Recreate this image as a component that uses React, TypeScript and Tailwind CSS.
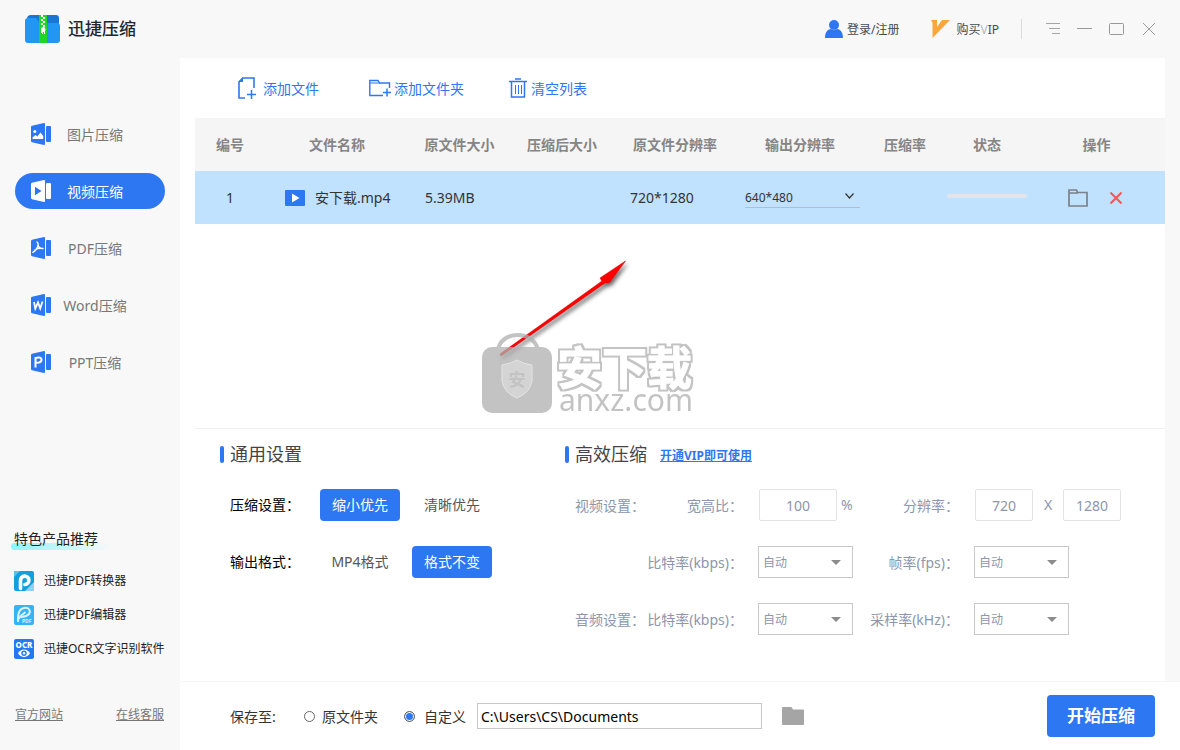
import { useState } from "react";
import type { ReactNode } from "react";

type NavKey = "image" | "video" | "pdf" | "word" | "ppt";

const navItems: { key: NavKey; label: string }[] = [
  { key: "image", label: "图片压缩" },
  { key: "video", label: "视频压缩" },
  { key: "pdf", label: "PDF压缩" },
  { key: "word", label: "Word压缩" },
  { key: "ppt", label: "PPT压缩" },
];

const columns = [
  { title: "编号", width: "w-[70px]" },
  { title: "文件名称", width: "w-[144px]" },
  { title: "原文件大小", width: "w-[101px]" },
  { title: "压缩后大小", width: "w-[104px]" },
  { title: "原文件分辨率", width: "w-[122px]" },
  { title: "输出分辨率", width: "w-[128px]" },
  { title: "压缩率", width: "w-[82px]" },
  { title: "状态", width: "w-[82px]" },
  { title: "操作", width: "" },
];

const files = [{ id: 1, name: "安下载.mp4", size: "5.39MB", resolution: "720*1280" }];

function Logo() {
  return (
    <svg width="35" height="28" viewBox="0 0 35 28" aria-hidden="true">
      <path d="M2 4a4 4 0 0 1 4-4h25a3 3 0 0 1 3 3v10H2z" fill="#1976d2" />
      <path d="M0 6a3 3 0 0 1 3-3h7c3 0 3 5 6 5h16a3 3 0 0 1 3 3v14a3 3 0 0 1-3 3H3a3 3 0 0 1-3-3z" fill="#2196f3" />
      <path d="M14 0h8v28h-8z" fill="#1fd622" />
      <path
        d="M16 0h2v2h-2zM18 2h2v2h-2zM16 4h2v2h-2zM18 6h2v2h-2zM16 8h2v2h-2zM18 10h2v2h-2z"
        fill="#fff"
      />
      <path d="M18 12a2.500 2.500 0 0 1 2 4v3h-1v-2h-1v2h-1v-1h-1v-4a2 2 0 0 1 2-2z" fill="#fff" />
    </svg>
  );
}

function NavIcon({ name, active }: { name: NavKey; active: boolean }) {
  const main = active ? "#fff" : "#2e77f2";
  const mark = active ? "#2e77f2" : "#fff";
  return (
    <svg width="20" height="22" viewBox="0 0 20 22" className="shrink-0" aria-hidden="true">
      <path d="M1 2.800 13 .1q1-.2 1 .9v20q0 1.100-1 .9L1 19.200q-1-.2-1-1.200V4q0-1 1-1.200z" fill={main} />
      <rect x="15" y="3" width="5" height="16" rx="1" fill={main} />
      {name === "image" && (
        <g fill={mark}>
          <circle cx="3.800" cy="8.500" r="1.500" />
          <path d="M1.500 16v-1.500L4.500 12l1.800 1.500L9.500 9.500l2.700 3.500v3z" />
        </g>
      )}
      {name === "video" && <path d="M4 6.800v8.400l6.500-4.200z" fill={mark} />}
      {name === "pdf" && (
        <path
          d="M6 5c1.500 1 1 3 1.500 4.500 1 1.500 2.500 2.300 4.500 2M7.200 8C6.500 11 5 13.500 1.800 15.300M4 13c2-1.500 5-1.800 7.500-1.500"
          fill="none"
          stroke={mark}
          strokeWidth="1.400"
          strokeLinecap="round"
        />
      )}
      {name === "word" && (
        <path d="M3 8l1.300 6.500L7 8.500l2.200 6L11.500 7.500" fill="none" stroke={mark} strokeWidth="1.800" />
      )}
      {name === "ppt" && (
        <path d="M4.500 16.500V7l3-.5c4-.6 3.800 4.500.5 5l-3 .3" fill="none" stroke={mark} strokeWidth="2" />
      )}
    </svg>
  );
}

function ConverterIcon() {
  return (
    <svg width="20" height="20" viewBox="0 0 20 20" aria-hidden="true">
      <rect width="20" height="20" rx="2" fill="#12a0dc" />
      <path d="M20 11v7a2 2 0 0 1-2 2h-7z" fill="#8fd3f1" />
      <path d="M0 0h6L0 6z" fill="#5cc2ec" />
      <path
        d="M6.500 17.500V9.500a4.200 4.200 0 1 1 4.500 4"
        fill="none"
        stroke="#fff"
        strokeWidth="3.600"
        strokeLinecap="round"
      />
    </svg>
  );
}

function EditorIcon() {
  return (
    <svg width="20" height="20" viewBox="0 0 20 20" aria-hidden="true">
      <rect width="20" height="20" rx="2" fill="#36b3f3" />
      <path d="M4 17C4 11 4 4 10 3c5-1 7 3 5 6-2 2-5 3-8 3" fill="none" stroke="#d9f2ff" strokeWidth="2" />
      <path d="M4.500 14c2-3 4-5 7-7" stroke="#d9f2ff" strokeWidth="2" />
      <text x="8" y="18" fontSize="5" fontWeight="700" fill="#d9f2ff">PDF</text>
    </svg>
  );
}

function OcrIcon() {
  return (
    <svg width="20" height="20" viewBox="0 0 20 20" aria-hidden="true">
      <rect width="20" height="20" rx="2" fill="#2478f2" />
      <text x="10" y="9" fontSize="8" fontWeight="800" textAnchor="middle" fill="#fff">OCR</text>
      <path d="M4 14.200c3-5 9-5 12 0-3 5-9 5-12 0z" fill="#fff" />
      <circle cx="10" cy="14.200" r="2.700" fill="#2478f2" />
      <circle cx="10" cy="14.200" r="1.200" fill="#fff" />
    </svg>
  );
}

const products = [
  { name: "迅捷PDF转换器", icon: <ConverterIcon /> },
  { name: "迅捷PDF编辑器", icon: <EditorIcon /> },
  { name: "迅捷OCR文字识别软件", icon: <OcrIcon /> },
];

function TopBar() {
  return (
    <header className="flex h-[58px] items-center pl-[25px] pr-[25px]">
      <Logo />
      <h1 className="ml-2 text-[17px] leading-6 font-medium text-[#22272e]">迅捷压缩</h1>
      <div className="ml-auto flex items-center text-xs text-[#444b55]">
        <button className="flex items-center gap-1">
          <svg width="18" height="18" viewBox="0 0 18 18" aria-hidden="true">
            <circle cx="9" cy="5" r="5" fill="#2e77f2" />
            <path d="M0 18c0-6 3-9 6-9 2 1.500 4 1.500 6 0 3 0 6 3 6 9z" fill="#2e77f2" />
          </svg>
          <span className="pt-0.5">登录/注册</span>
        </button>
        <button className="ml-8 flex items-center gap-1.5">
          <svg width="19" height="18" viewBox="0 0 19 18" aria-hidden="true">
            <path d="M0 0h6v7l5-7h8L1.500 18V3z" fill="#f9a63a" />
          </svg>
          <span className="pt-0.5">
            购买<span className="text-[#b5b8bc]">V</span>IP
          </span>
        </button>
        <span className="ml-[22px] h-5 w-px bg-[#dcdcdc]" />
        <button aria-label="菜单" className="ml-6">
          <svg width="14" height="12" viewBox="0 0 14 12" stroke="#a5a5a5" aria-hidden="true">
            <path d="M0 .5h14M3 5.500h11M6 10.500h8" />
          </svg>
        </button>
        <button aria-label="最小化" className="ml-[17px]">
          <svg width="15" height="12" viewBox="0 0 15 12" stroke="#999" aria-hidden="true">
            <path d="M0 5.500h15" />
          </svg>
        </button>
        <button aria-label="最大化" className="ml-[17px]">
          <svg width="15" height="12" viewBox="0 0 15 12" fill="none" stroke="#999" aria-hidden="true">
            <rect x=".5" y=".5" width="14" height="11" rx="1" />
          </svg>
        </button>
        <button aria-label="关闭" className="ml-[19px]">
          <svg width="12" height="12" viewBox="0 0 12 12" stroke="#999" aria-hidden="true">
            <path d="m0 0 12 12M12 0 0 12" />
          </svg>
        </button>
      </div>
    </header>
  );
}

function Sidebar() {
  const [active, setActive] = useState<NavKey>("video");
  return (
    <aside className="flex w-[180px] shrink-0 flex-col">
      <nav className="flex flex-col gap-[21px] px-[15px] pt-[58px]">
        {navItems.map((item) => (
          <button
            key={item.key}
            onClick={() => setActive(item.key)}
            className={`flex h-9 items-center rounded-full pl-4 text-sm ${
              item.key === active ? "bg-[#2e77f2] text-white" : "text-[#777]"
            }`}
          >
            <NavIcon name={item.key} active={item.key === active} />
            <span className="w-[88px] pt-0.5 text-center">{item.label}</span>
          </button>
        ))}
      </nav>

      <section className="mt-auto pl-[14px]">
        <h2 className="relative text-sm text-[#222]">
          <span className="absolute -bottom-px -left-[3px] h-[7px] w-[100px] rounded-full bg-linear-to-r from-[#8ef5fa] to-transparent" />
          <span className="relative">特色产品推荐</span>
        </h2>
        <ul className="mt-[22px] flex flex-col gap-3.5">
          {products.map((p) => (
            <li key={p.name}>
              <a href="#" className="flex h-5 items-center gap-2.5 text-xs whitespace-nowrap text-[#222]">
                {p.icon}
                {p.name}
              </a>
            </li>
          ))}
        </ul>
      </section>

      <div className="mt-12 mb-[27px] flex justify-between pr-4 pl-[15px] text-xs text-[#777] underline">
        <a href="#">官方网站</a>
        <a href="#">在线客服</a>
      </div>
    </aside>
  );
}

function Toolbar() {
  return (
    <div className="flex h-[60px] items-center pl-[43px] text-sm text-[#2e77f2]">
      <button className="flex items-center gap-[7px]">
        <svg width="18" height="22" viewBox="0 0 18 22" fill="none" stroke="#2e77f2" aria-hidden="true">
          <path d="M16 11V1H5L1 5v16h6" strokeWidth="1.600" />
          <path d="M5 0v5H0z" fill="#2e77f2" stroke="none" />
          <path d="M13.500 13v9M9 17.500h9" strokeWidth="1.500" />
        </svg>
        <span className="pt-0.5">添加文件</span>
      </button>
      <button className="ml-[50px] flex items-center gap-[3px]">
        <svg width="22" height="18" viewBox="0 0 22 18" fill="none" stroke="#2e77f2" aria-hidden="true">
          <path d="M20.500 9V4H10.500L9 1.500H.8v15H14" strokeWidth="1.400" />
          <path d="M1 4h10" />
          <path d="M18 9.500v8M14 13.500h8" strokeWidth="1.500" />
        </svg>
        <span className="pt-0.5">添加文件夹</span>
      </button>
      <button className="ml-[45px] flex items-center gap-1">
        <svg width="18" height="20" viewBox="0 0 18 20" fill="none" stroke="#2e77f2" aria-hidden="true">
          <path d="M0 3.500h18M6 1h6M2.500 4v15h13V4" strokeWidth="1.500" />
          <path d="M6.500 7v9M9.500 7v9M12.500 7v9" />
        </svg>
        <span className="pt-0.5">清空列表</span>
      </button>
    </div>
  );
}

function FileTable() {
  return (
    <table className="w-full table-fixed text-sm">
      <thead>
        <tr className="h-[53px] bg-[#f5f5f5] text-[#858585]">
          {columns.map((c) => (
            <th key={c.title} className={`font-bold whitespace-nowrap ${c.width}`}>
              {c.title}
            </th>
          ))}
        </tr>
      </thead>
      <tbody>
        {files.map((f) => (
          <tr key={f.id} className="h-[53px] bg-[#c1e2ff] text-[#333]">
            <td className="text-center">{f.id}</td>
            <td className="pl-5">
              <div className="flex items-center gap-2.5">
                <svg width="20" height="16" viewBox="0 0 20 16" aria-hidden="true">
                  <rect width="20" height="16" rx="1" fill="#2e77f2" />
                  <path d="M7 3.500v9l7.500-4.500z" fill="#fff" />
                </svg>
                {f.name}
              </div>
            </td>
            <td className="pl-4">{f.size}</td>
            <td />
            <td className="pl-4">{f.resolution}</td>
            <td className="pl-[9px]">
              <div className="relative w-[115px]">
                <select
                  aria-label="输出分辨率"
                  className="h-5 w-full appearance-none border-b border-[#b9bcc2] text-xs outline-none"
                >
                  <option>640*480</option>
                  <option>720*1280</option>
                </select>
                <svg
                  width="9"
                  height="6"
                  viewBox="0 0 9 6"
                  className="pointer-events-none absolute top-1.5 right-1.5"
                  fill="none"
                  stroke="#333"
                  strokeWidth="1.200"
                  aria-hidden="true"
                >
                  <path d="m.5.500 4 4.500 4-4.500" />
                </svg>
              </div>
            </td>
            <td />
            <td>
              <div className="mx-auto mb-1 h-1 w-20 rounded-full bg-[#e3e5e8]" />
            </td>
            <td>
              <div className="flex items-center gap-[22px] pl-10">
                <button aria-label="打开文件夹">
                  <svg width="20" height="18" viewBox="0 0 20 18" fill="none" stroke="#7b8188" strokeWidth="1.700" aria-hidden="true">
                    <path d="M1 4V1h7.500l1 2.500H19V17H1V4h9" />
                  </svg>
                </button>
                <button aria-label="删除">
                  <svg width="12" height="12" viewBox="0 0 12 12" stroke="#f75454" strokeWidth="2" aria-hidden="true">
                    <path d="m.5.500 11 11M11.500.500l-11 11" />
                  </svg>
                </button>
              </div>
            </td>
          </tr>
        ))}
      </tbody>
    </table>
  );
}

function Watermark() {
  return (
    <svg width="222" height="165" viewBox="0 0 222 165" className="mt-[31px] ml-[285px]" role="img" aria-label="安下载 anxz.com">
      <defs>
        <filter id="arrow-shadow" x="-10%" y="-10%" width="130%" height="130%">
          <feDropShadow dx="2" dy="3" stdDeviation="2" floodColor="#000" floodOpacity="0.6" />
        </filter>
        {/* white letters with a thin grey rim */}
        <filter id="rim" x="-5%" y="-10%" width="110%" height="120%">
          <feMorphology in="SourceAlpha" operator="dilate" radius="2" result="fat" />
          <feFlood floodColor="#afafaf" />
          <feComposite in2="fat" operator="in" result="edge" />
          <feMerge>
            <feMergeNode in="edge" />
            <feMergeNode in="SourceGraphic" />
          </feMerge>
        </filter>
      </defs>
      <path
        d="M20 99 122 26 120 23 145.500 6 130 27 128 28 125 28 21 101z"
        fill="#fe0000"
        stroke="#c00"
        strokeWidth=".5"
        filter="url(#arrow-shadow)"
      />
      <g opacity=".75">
        <path d="M18 95c3-20 36-20 40 0" fill="none" stroke="#afafaf" strokeWidth="4" />
        <rect x="2" y="92" width="70" height="66" rx="10" fill="#afafaf" />
        <path d="M22 110q8-1 15-5 7 4 15 5v16q-2 12-15 17-13-5-15-17z" fill="#c6c6c6" stroke="#dcdcdc" />
        <text x="37" y="131" fontSize="17" fontWeight="700" textAnchor="middle" fill="#afafaf">安</text>
        <text
          x="77"
          y="130"
          fontSize="45"
          fontWeight="700"
          fill="#fff"
          stroke="#fff"
          strokeWidth="1"
          strokeLinejoin="round"
          filter="url(#rim)"
        >
          安下载
        </text>
        <text x="79" y="156" fontSize="30" fill="#afafaf">anxz.com</text>
      </g>
    </svg>
  );
}

function SectionTitle({ children }: { children: ReactNode }) {
  return (
    <h2 className="flex h-6 items-center gap-1.5 text-lg leading-6 text-[#444]">
      <span className="h-[17px] w-1 rounded-xs bg-[#2e77f2]" />
      {children}
    </h2>
  );
}

function OptionRow({ label, options, initial }: { label: string; options: string[]; initial: string }) {
  const [value, setValue] = useState(initial);
  return (
    <div className="flex h-8 items-center">
      <span className="w-[90px] text-black">{label}</span>
      <div className="flex gap-3">
        {options.map((o) => (
          <button
            key={o}
            onClick={() => setValue(o)}
            className={`h-8 w-20 rounded ${o === value ? "bg-[#2e77f2] text-white" : "text-[#555]"}`}
          >
            {o}
          </button>
        ))}
      </div>
    </div>
  );
}

function AutoSelect({ id }: { id: string }) {
  return (
    <div className="relative w-[95px]">
      <select id={id} className="h-8 w-full appearance-none border border-[#c8c8c8] bg-white px-1 pt-0.5 text-xs outline-none">
        <option>自动</option>
      </select>
      <svg width="10" height="5" viewBox="0 0 10 5" className="pointer-events-none absolute top-3.5 right-3" aria-hidden="true">
        <path d="M0 0h10L5 5z" fill="#8c8c8c" />
      </svg>
    </div>
  );
}

function Settings() {
  const box = "h-8 rounded-xs border border-[#e3e3e3] text-center outline-none";
  const label = "pt-0.5 text-right";
  return (
    <section className="flex border-t border-[#efefef] pt-[13px] pb-[46px] pl-[25px] text-sm">
      <div className="w-[345px] shrink-0">
        <SectionTitle>通用设置</SectionTitle>
        <div className="mt-[23px] flex flex-col gap-[25px] pl-2.5">
          <OptionRow label="压缩设置：" options={["缩小优先", "清晰优先"]} initial="缩小优先" />
          <OptionRow label="输出格式：" options={["MP4格式", "格式不变"]} initial="格式不变" />
        </div>
      </div>

      <div>
        <div className="flex items-center gap-[13px]">
          <SectionTitle>高效压缩</SectionTitle>
          <a href="#" className="pt-1 text-xs font-bold text-[#2e77f2] underline">
            开通VIP即可使用
          </a>
        </div>
        <div className="mt-[23px] grid grid-cols-[70px_98px_125px_91px_auto] items-center gap-y-[25px] pl-2.5 whitespace-nowrap text-[#8c96ad]">
          <span className="pt-0.5">视频设置：</span>
          <label htmlFor="ratio" className={label}>宽高比：</label>
          <div className="flex items-center gap-1 pl-4">
            <input id="ratio" defaultValue="100" className={`w-[78px] ${box}`} />
            %
          </div>
          <label htmlFor="res-w" className={label}>分辨率：</label>
          <div className="flex items-center pl-4">
            <input id="res-w" defaultValue="720" className={`w-[58px] ${box}`} />
            <span className="w-[30px] text-center">X</span>
            <input aria-label="分辨率高度" defaultValue="1280" className={`w-[58px] ${box}`} />
          </div>

          <span />
          <label htmlFor="video-rate" className={label}>比特率(kbps)：</label>
          <div className="pl-[15px]"><AutoSelect id="video-rate" /></div>
          <label htmlFor="fps" className={label}>帧率(fps)：</label>
          <div className="pl-[15px]"><AutoSelect id="fps" /></div>

          <span className="pt-0.5">音频设置：</span>
          <label htmlFor="audio-rate" className={label}>比特率(kbps)：</label>
          <div className="pl-[15px]"><AutoSelect id="audio-rate" /></div>
          <label htmlFor="sample" className={label}>采样率(kHz)：</label>
          <div className="pl-[15px]"><AutoSelect id="sample" /></div>
        </div>
      </div>
    </section>
  );
}

function SaveBar() {
  const radio =
    "size-[11px] appearance-none rounded-full border border-[#666] checked:bg-[#2e77f2] checked:shadow-[inset_0_0_0_1px_white]";
  return (
    <footer className="flex h-[69px] items-center border-t border-[#f5f5f5] bg-white pr-[25px] pl-[50px] text-sm text-[#333]">
      <span className="w-[74px] pt-0.5">保存至:</span>
      <label className="flex items-center gap-[7px]">
        <input type="radio" name="target" className={radio} />
        <span className="pt-0.5">原文件夹</span>
      </label>
      <label className="ml-[26px] flex items-center gap-[9px]">
        <input type="radio" name="target" defaultChecked className={radio} />
        <span className="pt-0.5">自定义</span>
      </label>
      <input
        aria-label="保存路径"
        defaultValue="C:\Users\CS\Documents"
        className="ml-[11px] h-[26px] w-[285px] border border-[#c8c8c8] px-[3px] text-black outline-none"
      />
      <button aria-label="选择文件夹" className="ml-5">
        <svg width="22" height="18" viewBox="0 0 22 18" aria-hidden="true">
          <path d="M0 1q0-1 1-1h8q1 0 1 1l1 1.500h10q1 0 1 1V17q0 1-1 1H1q-1 0-1-1z" fill="#a5a5a5" />
        </svg>
      </button>
      <button className="ml-auto h-[42px] w-[108px] rounded bg-[#2e77f2] text-[17px] font-bold text-white">
        开始压缩
      </button>
    </footer>
  );
}

export default function App() {
  return (
    <div className="flex min-h-screen flex-col bg-[#f8f8f8] font-['Noto_Sans','Noto_Sans_CJK_SC',sans-serif]">
      <TopBar />
      <div className="flex flex-1">
        <Sidebar />
        <main className="flex min-w-0 flex-1 flex-col">
          <div className="mr-[15px] flex flex-1 flex-col bg-white pl-[15px]">
            <Toolbar />
            <FileTable />
            <div className="flex-1">
              <Watermark />
            </div>
            <Settings />
          </div>
          <SaveBar />
        </main>
      </div>
    </div>
  );
}
